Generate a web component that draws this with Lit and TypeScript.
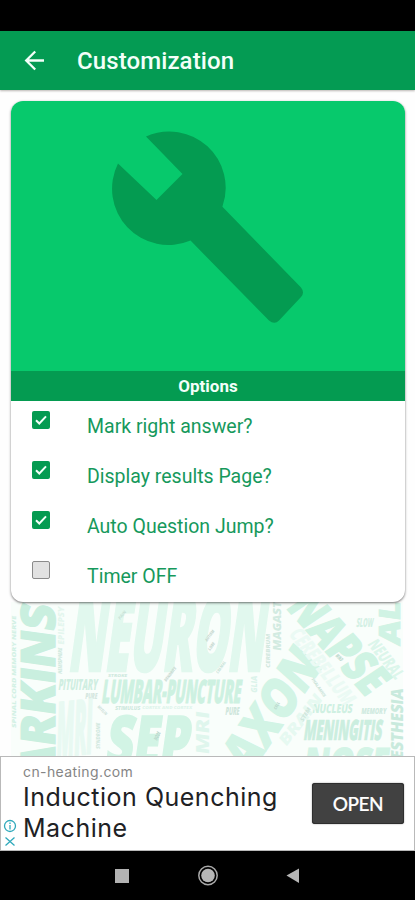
import { LitElement, html, css, svg } from "lit";
import { customElement, property, state } from "lit/decorators.js";
import { classMap } from "lit/directives/class-map.js";

interface Word {
  t: string;
  x: number;
  y: number;
  len: number;
  cap: number;
  rot?: number;
  c: string;
}

const WORDS: Word[] = [
  { t: "NEURON", x: 67, y: 671, len: 196, cap: 75, c: "#e1f8ee" },
  { t: "ARKINS", x: 55, y: 780, len: 174, cap: 34, rot: -90, c: "#c9efdf" },
  { t: "PITUITARY", x: 58, y: 690, len: 39, cap: 11, c: "#cfeee1" },
  { t: "PURE", x: 85, y: 699, len: 12, cap: 6, c: "#d3e6de" },
  { t: "LUMBAR-PUNCTURE", x: 101, y: 703, len: 139, cap: 23, c: "#cdf1e1" },
  { t: "PURE", x: 225, y: 715, len: 14, cap: 8, c: "#cfe6dc" },
  { t: "MRI", x: 56, y: 757, len: 36, cap: 54, rot: -6, c: "#e8f9f2" },
  { t: "SEP", x: 104, y: 766, len: 84, cap: 50, c: "#d2f4e5" },
  { t: "MRI", x: 209, y: 755, len: 43, cap: 13, rot: -90, c: "#dff6ed" },
  { t: "AXON", x: 248, y: 777, len: 134, cap: 37, rot: -56, c: "#d2f4e5" },
  { t: "SYNAPSE", x: 255, y: 574, len: 166, cap: 33, rot: 48, c: "#cff3e3" },
  { t: "MENINGITIS", x: 303, y: 740, len: 78, cap: 20, c: "#cbeedf" },
  { t: "NUCLEUS", x: 312, y: 713, len: 40, cap: 9, c: "#cff0e2" },
  { t: "MEMORY", x: 361, y: 714, len: 25, cap: 6, c: "#cfeae0" },
  { t: "ANESTHESIA", x: 403, y: 783, len: 94, cap: 12, rot: -90, c: "#c9eadd" },
  { t: "MAGASTAR", x: 281, y: 651, len: 65, cap: 8, rot: -90, c: "#d2ebe1" },
  { t: "CEREBRUM", x: 270, y: 668, len: 34, cap: 4, rot: -90, c: "#d3e8df" },
  { t: "ALZ", x: 400, y: 646, len: 64, cap: 21, rot: -90, c: "#d0f3e4" },
  { t: "SLOW", x: 356, y: 627, len: 17, cap: 9, c: "#d3f0e4" },
  { t: "NEURAL", x: 367, y: 644, len: 46, cap: 12, rot: 52, c: "#dcf6eb" },
  { t: "CEREBELLUM", x: 288, y: 634, len: 92, cap: 15, rot: 52, c: "#ebfaf4" },
  { t: "BRAIN", x: 286, y: 747, len: 60, cap: 11, rot: -52, c: "#e6f9f1" },
  { t: "NOSE", x: 302, y: 779, len: 85, cap: 31, c: "#d3f4e6" },
  { t: "SPINAL CORD MEMORY NERVE", x: 15.5, y: 728, len: 112, cap: 4, rot: -90, c: "#d3f1e5" },
  { t: "HEMISPHERE", x: 62, y: 674, len: 26, cap: 4, rot: -90, c: "#cfe9de" },
  { t: "EPILEPSY", x: 64, y: 645, len: 38, cap: 6, rot: -90, c: "#e4f6ee" },
  { t: "SYNDROME", x: 100, y: 749, len: 26, cap: 4, rot: -90, c: "#d2e8df" },
  { t: "STROKE", x: 108, y: 677, len: 19, cap: 3, c: "#d0eadf" },
  { t: "STIMULUS", x: 115, y: 710, len: 25, cap: 4, c: "#cfe9de" },
  { t: "CORTEX AND CORTEX", x: 142, y: 709, len: 50, cap: 3, c: "#dff5ec" },
  { t: "DENDRITE", x: 166, y: 682, len: 17, cap: 3, rot: -52, c: "#c6d8d0" },
  { t: "AUTISM", x: 207, y: 642, len: 13, cap: 3, rot: -55, c: "#c6d8d0" },
  { t: "LOBE", x: 210, y: 651, len: 9, cap: 3, rot: -55, c: "#c6d8d0" },
  { t: "CRANIAL", x: 218, y: 674, len: 14, cap: 3, rot: -55, c: "#c9e4d9" },
  { t: "MYELIN", x: 97, y: 707, len: 12, cap: 3, rot: 45, c: "#d0e3db" },
  { t: "STEM", x: 303, y: 722, len: 15, cap: 4, rot: -58, c: "#cfe6dc" },
  { t: "THALAMUS", x: 311, y: 679, len: 22, cap: 3, rot: 55, c: "#cbe4d9" },
  { t: "GLIA", x: 257, y: 693, len: 17, cap: 6, rot: -90, c: "#dbf3ea" },
  { t: "CELL", x: 276, y: 710, len: 8, cap: 3, rot: -60, c: "#b9d8cc" },
  { t: "NODE", x: 157, y: 741, len: 9, cap: 4, rot: -65, c: "#b9d8cc" },
  { t: "PAIN", x: 120, y: 620, len: 10, cap: 3, rot: -50, c: "#c9e4d9" },
  { t: "MIND", x: 335, y: 656, len: 8, cap: 4, rot: 45, c: "#b9d8cc" },
];

@customElement("word-cloud")
export class WordCloud extends LitElement {
  static styles = css`
    :host { display: block; height: 154px; }
    svg { display: block; }
    text { font-family: "Open Sans", Roboto, sans-serif; font-weight: 800; }
  `;
  render() {
    return html`<svg width="415" height="154" viewBox="0 602 415 154" aria-hidden="true">
      <rect x="11" y="602" width="392" height="154" fill="#f9fefb" />
      ${WORDS.map(
        (w) => svg`<text
          transform="translate(${w.x} ${w.y}) rotate(${w.rot ?? 0}) skewX(-8)"
          font-size=${w.cap / 0.714} textLength=${w.len} lengthAdjust="spacingAndGlyphs"
          fill=${w.c} stroke=${w.c} stroke-width=${w.cap > 18 ? w.cap * 0.035 : 0}>${w.t}</text>`
      )}
    </svg>`;
  }
}

@customElement("option-row")
export class OptionRow extends LitElement {
  @property() label = "";
  @property({ type: Boolean }) checked = false;
  static styles = css`
    :host { display: block; height: 50.1px; }
    .row { display: flex; height: 100%; align-items: flex-start; }
    .box {
      box-sizing: border-box; width: 18px; height: 18px; margin: 9.5px 37px 0 21px;
      border-radius: 2px; border: 1.5px solid #8b8b8b; background: #e2e2e2; flex: none;
    }
    .box.on { border: none; background: #049b51; }
    svg { display: block; }
    .label {
      font: 400 19.5px/24px Roboto, sans-serif; color: #16995c; margin-top: 14px; white-space: nowrap;
    }
  `;
  render() {
    return html`<div class="row">
      <div class=${classMap({ box: true, on: this.checked })} role="checkbox" aria-checked=${this.checked}>
        ${this.checked
          ? html`<svg width="18" height="18" viewBox="0 0 18 18">
              <path d="M4 9.2 7.3 12.5 14 5.4" fill="none" stroke="#f2fff8" stroke-width="2" />
            </svg>`
          : ""}
      </div>
      <span class="label">${this.label}</span>
    </div>`;
  }
}

@customElement("app-root")
export class AppRoot extends LitElement {
  @state() private options = [
    { label: "Mark right answer?", checked: true },
    { label: "Display results Page?", checked: true },
    { label: "Auto Question Jump?", checked: true },
    { label: "Timer OFF", checked: false },
  ];

  static styles = css`
    :host {
      display: flex; flex-direction: column; width: 415px; height: 900px;
      overflow: hidden; background: #fefefe; font-family: Roboto, sans-serif;
    }
    svg { display: block; }
    .status { height: 30.5px; background: #000; flex: none; }
    .bar {
      height: 59.5px; flex: none; background: #049b53; display: flex; align-items: center;
      color: #f3fff9; box-shadow: 0 1px 2px rgba(60, 50, 40, 0.35);
    }
    .back { margin-left: 24px; width: 21px; }
    .title {
      margin-left: 32px; padding-top: 2px; font-size: 24px; font-weight: 500; line-height: 28px;
      letter-spacing: 0.1px;
    }
    .card {
      flex: none; margin: 11px 10px 0 11px; height: 501px; border-radius: 12px; background: #fff;
      display: flex; flex-direction: column; overflow: hidden;
      box-shadow: 0 1px 2.5px rgba(0, 0, 0, 0.55);
      position: relative;
    }
    .hero { height: 270px; flex: none; background: #07c96c; }
    .band {
      height: 30px; flex: none; background: #049b51; color: #f3fff9; text-align: center;
      font-size: 17px; font-weight: 700; line-height: 30px;
    }
    .ad {
      box-sizing: border-box; height: 95px; flex: none; background: #fff;
      border: solid #b9b9b9; border-width: 1.5px 1px 1px 1.5px;
      display: flex; align-items: flex-start;
    }
    .marks { width: 18px; padding: 62px 0 0 2px; box-sizing: border-box; }
    .copy { width: 289px; margin-left: 4px; padding-top: 6px; white-space: nowrap; }
    .site { font: 400 14px/18px Inter, sans-serif; color: #858585; letter-spacing: 0.4px; }
    .headline { font: 400 25px/31px Inter, sans-serif; color: #202124; letter-spacing: 0.5px; margin-top: 1px; }
    .open {
      margin-top: 26px; width: 92px; height: 41px; border-radius: 3px; background: #414141;
      color: #fff; font: 500 19px/42px Lato, sans-serif; text-align: center; letter-spacing: -0.5px;
      -webkit-text-stroke: 0.2px #fff;
      box-shadow: inset 0 0 0 1px #2e2e2e, 0 0 1.5px rgba(0, 0, 0, 0.5);
    }
    .nav { flex: 1; background: #000; }
  `;

  render() {
    return html`
      <div class="status"></div>
      <div class="bar">
        <svg class="back" width="21" height="21" viewBox="0 0 21 21">
          <path d="M20 10.5H2.5M11.2 1.5 2.2 10.5l9 9" fill="none" stroke="#f3fff9" stroke-width="2.3" />
        </svg>
        <span class="title">Customization</span>
      </div>
      <div class="card">
        <svg class="hero" width="394" height="270" viewBox="11 101 394 270">
          <path
            fill="#049b51"
            d="M146 136.500A56.400 56.400 0 0 1 222.400 206.800L301 287.500Q305 292.500 301 297L279 320.500Q274.500 325 269 320.500L190.500 240.600A56.400 56.400 0 0 1 118 163.500L156.500 200 182.500 174Z"
          />
        </svg>
        <div class="band">Options</div>
        ${this.options.map((o) => html`<option-row .label=${o.label} .checked=${o.checked}></option-row>`)}
      </div>
      <word-cloud></word-cloud>
      <div class="ad">
        <div class="marks">
          <svg width="14" height="29" viewBox="0 0 14 29" fill="none" stroke="#2fa9bb" stroke-width="1.3">
            <circle cx="7" cy="7" r="5.500" />
            <path d="M7 6v4.500M7 3.400v1.500M2.500 18.500l9 8M11.500 18.500l-9 8" />
          </svg>
        </div>
        <div class="copy">
          <div class="site">cn-heating.com</div>
          <div class="headline">Induction Quenching<br />Machine</div>
        </div>
        <div class="open">OPEN</div>
      </div>
      <svg class="nav" width="415" height="49" viewBox="0 851 415 49">
        <rect x="115" y="869" width="14" height="14" fill="#b2b2b2" />
        <circle cx="208" cy="875.500" r="9.200" fill="none" stroke="#a9a9a9" stroke-width="1.500" />
        <circle cx="208" cy="875.500" r="6.800" fill="#b6b6b6" />
        <path d="M286.500 875.500 299 868.500V883Z" fill="#b6b6b6" />
      </svg>
    `;
  }
}
